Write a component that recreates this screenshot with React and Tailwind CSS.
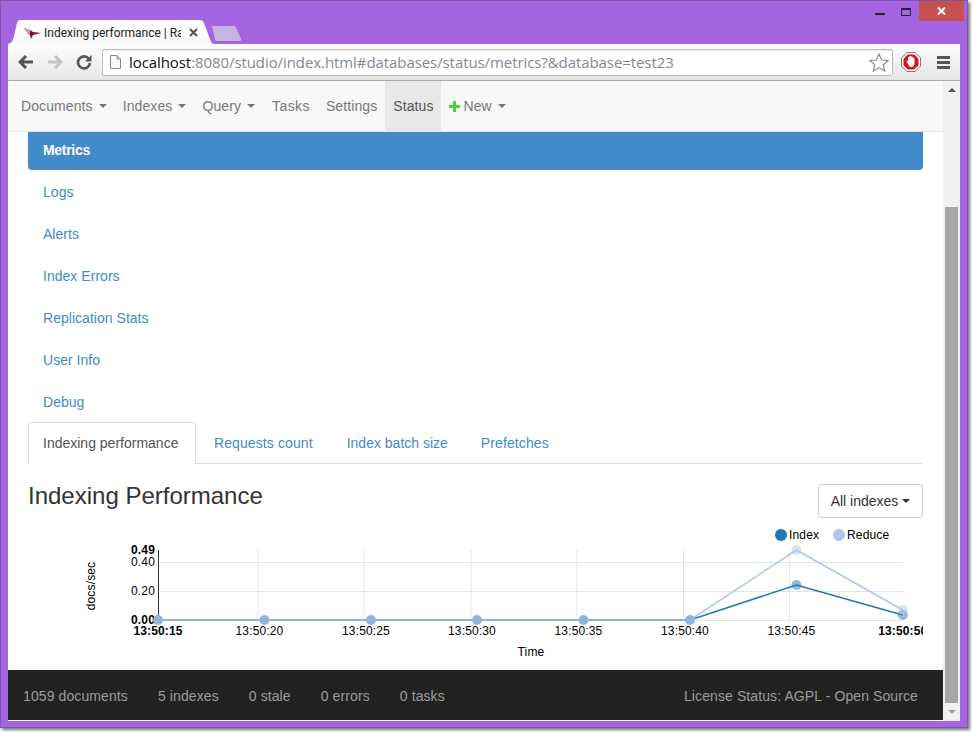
import React from "react";

const NAV = [
  { label: "Documents", caret: true, cls: "pl-[13px] pr-[8px]" },
  { label: "Indexes", caret: true, cls: "px-[8px]" },
  { label: "Query", caret: true, cls: "pl-[8px] pr-[9px]" },
  { label: "Tasks", cls: "px-[8px] tracking-[0.4px]" },
  { label: "Settings", cls: "px-[8px]" },
  { label: "Status", cls: "pl-[8px] pr-[7px] bg-[#e7e7e7] text-[#555]" },
];

const LINKS = ["Logs", "Alerts", "Index Errors", "Replication Stats", "User Info", "Debug"];
const TABS = [
  { label: "Requests count", cls: "ml-[3px]" },
  { label: "Index batch size", cls: "ml-[4px] tracking-normal" },
  { label: "Prefetches", cls: "ml-[3px]" },
];
const STATS = ["1059 documents", "5 indexes", "0 stale", "0 errors", "0 tasks"];

const POINTS_X = [130, 236.5, 343, 449, 555.5, 662, 768.4, 874.8];
const GRID_X = [230, 336, 443, 549, 655.5, 761.6];
const TICKS = ["13:50:15", "13:50:20", "13:50:25", "13:50:30", "13:50:35", "13:50:40", "13:50:45", "13:50:50"];

const Caret = ({ color = "border-t-[#777]" }) => (
  <span className={`inline-block w-0 h-0 ml-[6px] align-middle border-x-[4px] border-x-transparent border-t-[4px] ${color}`} />
);

/* ── Browser chrome ─────────────────────────────────────────── */

const TitleBar = () => (
  <div className="h-[43px] flex items-end relative">
    <div className="relative w-[206px] h-[24px] shrink-0">
      <svg width="206" height="24" viewBox="0 0 206 24" className="block">
        <defs>
          <linearGradient id="tabfill" x1="0" y1="0" x2="0" y2="1">
            <stop offset="0" stopColor="#ffffff" />
            <stop offset="1" stopColor="#f8f8f8" />
          </linearGradient>
        </defs>
        <path d="M0 24 C4 23 5 20 6 16 L9 3 C9.500 1 11 0 13 0 L192 0 C194 0 195 1 196 3 L202 19 C203 22 204 24 206 24 Z" fill="url(#tabfill)" />
      </svg>
      <div className="absolute inset-0 flex items-center pl-[16px] pt-[1px]">
        <svg width="17" height="12" viewBox="0 0 17 12" className="shrink-0">
          <path d="M0 1 L6 3 L9 5 L17 6 L9 8 L7 12 L6 8 L3 5 Z" fill="#7a1437" />
          <path d="M0 1 L6 3 L6 7 L3 5 Z" fill="#d6a0b4" />
        </svg>
        <span className="ml-[3px] w-[137px] overflow-hidden whitespace-nowrap text-[12px] text-[#222] font-['Roboto',sans-serif]">
          Indexing performance | Ra
        </span>
        <svg width="9" height="9" viewBox="0 0 9 9" className="ml-[8px]">
          <path d="M1 1 L8 8 M8 1 L1 8" stroke="#555" strokeWidth="2" />
        </svg>
      </div>
    </div>
    <svg width="31" height="15" viewBox="0 0 31 15" className="mb-[3px] -ml-[3px] shrink-0">
      <path d="M1 1 C1 0.500 1.500 0 2 0 L23 0 C24 0 24.500 0.500 25 1.500 L30 13 C30.300 14 30 15 29 15 L6 15 C5 15 4.500 14.500 4 13.500 Z" fill="#c5b5e0" />
    </svg>

    <div className="absolute top-0 right-[-4px] flex items-start">
      <span className="w-[10px] h-[2px] bg-[#222] mt-[12px] mr-[16px]" />
      <span className="w-[8px] h-[5px] border border-[#222] border-t-2 mt-[7px] mr-[8px] box-content" />
      <div className="w-[45px] h-[20px] bg-[#c75050] flex items-center justify-center">
        <svg width="9" height="8" viewBox="0 0 9 8">
          <path d="M1 0.500 L8 7.500 M8 0.500 L1 7.500" stroke="#fff" strokeWidth="2" />
        </svg>
      </div>
    </div>
  </div>
);

const Toolbar = () => (
  <div className="h-[37px] flex items-center rounded-tr-[2px] border-b border-[#a9a9a9] bg-gradient-to-b from-[#fdfdfd] to-[#e6e6e6]">
    <svg width="16" height="14" viewBox="0 0 16 14" className="ml-[10px] shrink-0">
      <path d="M8 1 L2 7 L8 13 M2 7 L15 7" fill="none" stroke="#555" strokeWidth="3" />
    </svg>
    <svg width="16" height="14" viewBox="0 0 16 14" className="ml-[13px] shrink-0">
      <path d="M8 1 L14 7 L8 13 M14 7 L1 7" fill="none" stroke="#c4c4c4" strokeWidth="3" />
    </svg>
    <svg width="16" height="16" viewBox="0 0 16 16" className="ml-[13px] shrink-0">
      <path d="M13 5 A6 6 0 1 0 14 9" fill="none" stroke="#555" strokeWidth="2.600" />
      <path d="M15.500 1 L15.500 7.500 L9 7.500 Z" fill="#555" />
    </svg>
    <div className="ml-[10px] w-[791px] h-[27px] shrink-0 flex items-center bg-white border border-[#bdbdbd] rounded-[2px] shadow-[inset_0_1px_1px_rgba(0,0,0,0.08)]">
      <svg width="11" height="14" viewBox="0 0 11 14" className="ml-[7px] shrink-0">
        <path d="M0.500 0.500 L7 0.500 L10.500 4 L10.500 13.500 L0.500 13.500 Z" fill="#f7f7f7" stroke="#8a8a8a" />
        <path d="M7 0.500 L7 4 L10.500 4" fill="none" stroke="#8a8a8a" />
      </svg>
      <span className="ml-[8px] text-[15px] whitespace-nowrap font-['Open_Sans',sans-serif] text-[#7f8a93] tracking-[-0.08px]">
        <span className="text-[#111]">localhost</span>:8080/studio/index.html#databases/status/metrics?&amp;database=test23
      </span>
      <svg width="20" height="19" viewBox="0 0 20 19" className="ml-auto mr-[3px] shrink-0">
        <path d="M10 1 L12.600 7 L19 7.500 L14.200 11.700 L15.700 18 L10 14.600 L4.300 18 L5.800 11.700 L1 7.500 L7.400 7 Z" fill="#fff" stroke="#8f8f8f" strokeWidth="1.200" />
      </svg>
    </div>
    <svg width="20" height="20" viewBox="0 0 20 20" className="ml-[8px] shrink-0">
      <path d="M6 0.500 L14 0.500 L19.500 6 L19.500 14 L14 19.500 L6 19.500 L0.500 14 L0.500 6 Z" fill="#fff" stroke="#777" />
      <path d="M6.800 2.500 L13.200 2.500 L17.500 6.800 L17.500 13.200 L13.200 17.500 L6.800 17.500 L2.500 13.200 L2.500 6.800 Z" fill="#d8111c" />
      <path d="M5.500 9.500 L7 8.500 L7 5 L8.500 5 L8.500 4 L10 4 L10 4.500 L11.500 4.500 L11.500 5.500 L13.500 6 L13.500 11 C13.500 13.500 12.500 15 10.500 15 C8.500 15 8 14 7.500 13 Z" fill="#fff" />
    </svg>
    <div className="ml-[16px] w-[13px] flex flex-col gap-[2px] shrink-0">
      <span className="h-[3px] bg-[#555]" />
      <span className="h-[3px] bg-[#555]" />
      <span className="h-[3px] bg-[#555]" />
    </div>
  </div>
);

/* ── Page ───────────────────────────────────────────────────── */

const Navbar = () => (
  <div className="h-[51px] shrink-0 flex bg-[#f8f8f8] border-b border-[#e7e7e7] text-[14px] text-[#777]">
    {NAV.map((n) => (
      <div key={n.label} className={`h-[50px] flex items-center ${n.cls}`}>
        {n.label}
        {n.caret && <Caret />}
      </div>
    ))}
    <div className="h-[50px] flex items-center px-[8px] tracking-normal">
      <svg width="11" height="11" viewBox="0 0 11 11" className="mr-[4px]">
        <path d="M4 0 H7 V4 H11 V7 H7 V11 H4 V7 H0 V4 H4 Z" fill="#4fd13f" />
      </svg>
      New
      <Caret />
    </div>
  </div>
);

const Chart = () => (
  <svg width="895" height="144" viewBox="0 0 895 144" className="block -mt-[1px] tracking-[0.15px] font-['Liberation_Sans',sans-serif]">
    {/* origin of the drawing is page x=28, y=525 */}
    {GRID_X.map((x) => (
      <line key={x} x1={x} x2={x} y1="25" y2="95" stroke="#e5e5e5" />
    ))}
    <line x1="130" x2="875" y1="37.500" y2="37.500" stroke="#e5e5e5" />
    <line x1="130" x2="875" y1="66.500" y2="66.500" stroke="#e5e5e5" />
    <line x1="130" x2="875" y1="95.500" y2="95.500" stroke="#e5e5e5" />
    <line x1="130.500" x2="130.500" y1="25" y2="95" stroke="#333" />

    <g fontSize="12" fill="#000" textAnchor="end">
      <text x="127" y="29" fontWeight="700">0.49</text>
      <text x="127" y="41">0.40</text>
      <text x="127" y="70">0.20</text>
      <text x="127" y="99" fontWeight="700">0.00</text>
    </g>
    <text transform="translate(67 61) rotate(-90)" fontSize="12" fill="#000" textAnchor="middle">docs/sec</text>

    <polyline points="130,95 662,95 768.400,60 874.800,90" fill="none" stroke="#1f77b4" strokeWidth="1.500" />
    <polyline points="130,95 662,95 768.400,25 874.800,85" fill="none" stroke="#aec7e8" strokeWidth="1.500" />
    <line x1="130" x2="662" y1="95" y2="95" stroke="#8fb5dc" strokeWidth="2" />

    {POINTS_X.slice(0, 6).map((x) => (
      <circle key={x} cx={x} cy="95" r="5" fill="#8fb5dc" />
    ))}
    <circle cx="768.400" cy="60" r="5" fill="#1f77b4" fillOpacity="0.5" />
    <circle cx="874.800" cy="90" r="5" fill="#1f77b4" fillOpacity="0.5" />
    <circle cx="768.400" cy="25" r="5" fill="#aec7e8" fillOpacity="0.5" />
    <circle cx="874.800" cy="85" r="5" fill="#aec7e8" fillOpacity="0.5" />

    <g fontSize="12" fill="#000" textAnchor="middle">
      {TICKS.map((t, i) => (
        <text key={t} x={i === 0 || i === 7 ? POINTS_X[i] : POINTS_X[i] - 5} y="110" fontWeight={i === 0 || i === 7 ? 700 : 400}>{t}</text>
      ))}
      <text x="503" y="131">Time</text>
    </g>

    <circle cx="753" cy="10" r="6" fill="#1f77b4" />
    <text x="761" y="14" fontSize="12" fill="#000">Index</text>
    <circle cx="811" cy="10" r="6" fill="#aec7e8" />
    <text x="819" y="14" fontSize="12" fill="#000">Reduce</text>
  </svg>
);

const Page = () => (
  <div className="w-[935px] h-[640px] flex flex-col bg-white tracking-[0.1px] font-['Liberation_Sans',sans-serif]">
    <Navbar />
    <div className="px-[20px]">
      <div className="h-[38px] flex items-center pl-[15px] pb-[2px] bg-[#428bca] rounded-b-[4px] text-[14px] font-bold tracking-[-0.3px] text-white">
        Metrics
      </div>
      {LINKS.map((l) => (
        <div key={l} className="h-[40px] mt-[2px] flex items-center pl-[15px] text-[14px] tracking-[0.03px] text-[#428bca]">
          {l}
        </div>
      ))}
      <div className="h-[42px] flex border-b border-[#ddd] text-[14px]">
        <div className="h-[42px] w-[168px] flex items-center pl-[14px] bg-white border border-[#ddd] border-b-white rounded-t-[4px] tracking-normal text-[#555]">
          Indexing performance
        </div>
        {TABS.map((t) => (
          <div key={t.label} className={`h-[42px] px-[15px] flex items-center text-[#428bca] ${t.cls}`}>
            {t.label}
          </div>
        ))}
      </div>
      <div className="flex items-start justify-between mt-[20px] tracking-normal">
        <h3 className="text-[24px] leading-[26px] mt-[-1px] text-[#333]">Indexing Performance</h3>
        <div className="w-[105px] h-[34px] flex items-center justify-center bg-white border border-[#ccc] rounded-[4px] text-[14px] text-[#333]">
          All indexes
          <span className="inline-block w-0 h-0 ml-[4px] border-x-[4px] border-x-transparent border-t-[4px] border-t-[#333]" />
        </div>
      </div>
      <div className="mt-[8px]">
        <Chart />
      </div>
    </div>
    <div className="mt-auto mb-[1px] h-[50px] shrink-0 flex items-center pt-[2px] pl-[15px] pr-[25px] bg-[#222] text-[14px] text-[#9d9d9d]">
      {STATS.map((s) => (
        <span key={s} className="mr-[30px]">{s}</span>
      ))}
      <span className="ml-auto">License Status: AGPL - Open Source</span>
    </div>
  </div>
);

const Scrollbar = () => (
  <div className="w-[17px] h-[640px] shrink-0 flex flex-col items-center bg-[#f0f0f0]">
    <div className="h-[17px] flex items-center justify-center shrink-0">
      <span className="w-0 h-0 border-x-[4px] border-x-transparent border-b-[4px] border-b-[#505050]" />
    </div>
    <div className="w-[13px] h-[496px] mt-[109px] bg-[#a6a6a6] shrink-0" />
    <div className="flex-1 flex items-center justify-center">
      <span className="w-0 h-0 border-x-[4px] border-x-transparent border-t-[4px] border-t-[#a3a3a3]" />
    </div>
  </div>
);

export default function App() {
  return (
    <div className="w-[972px] h-[732px] bg-white overflow-hidden">
      <div className="w-[968px] h-[728px] pl-[7px] pr-[7px] bg-[#a665e0] border border-[#7d55a8] shadow-[2px_2px_3px_rgba(0,0,0,0.55)]">
        <TitleBar />
        <div className="bg-white">
          <Toolbar />
          <div className="flex">
            <Page />
            <Scrollbar />
          </div>
        </div>
      </div>
    </div>
  );
}
